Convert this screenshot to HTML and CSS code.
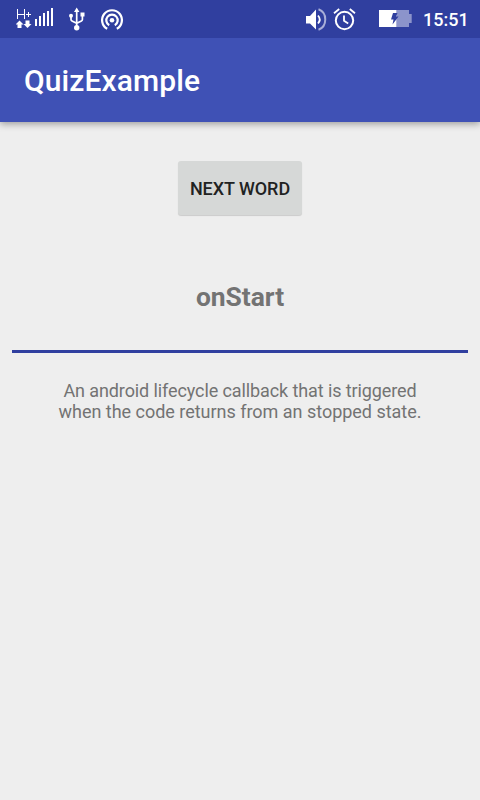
FILE: index.html
```html
<!DOCTYPE html>
<html lang="en">
<head>
<meta charset="utf-8">
<title>QuizExample</title>
<link rel="stylesheet" href="styles.css">
</head>
<body>
<header class="status">
  <svg class="signal" width="38" height="38" viewBox="16 0 38 38" fill="#fff">
    <path d="M17.500 9v10M24.500 9v10M17 14.500h8M26 14.500h5M28.500 12v5" fill="none" stroke="#fff" stroke-width="1"/>
    <path d="M19.500 20.500l4 4h-2v3.500h-4v-3.500h-2zM27.500 28l-4-4h2v-3.500h4v3.500h2z"/>
    <path d="M35 19h2v7h-2zM39 16h2v10h-2zM43 13h2v13h-2zM47 11h2v15h-2zM51 8h2v18h-2z"/>
  </svg>
  <svg class="usb" width="18" height="38" viewBox="68 0 18 38" fill="#fff">
    <path d="M76.700 11v16M71 16v3.500q0 1 1 1.500l4.700 2.300 4.700-2.300q1-.5 1-1.500v-4" fill="none" stroke="#fff" stroke-width="1.700"/>
    <path d="M76.700 7.500l2.700 4.500h-5.400zM80.500 12.500h4v4h-4z"/>
    <circle cx="71" cy="15.700" r="2"/><circle cx="76.700" cy="27.700" r="2.700"/>
  </svg>
  <svg class="hotspot" width="24" height="38" viewBox="100 0 24 38" fill="none" stroke="#fff" stroke-width="2.200">
    <circle cx="112" cy="20.200" r="2.300" fill="#fff" stroke="none"/>
    <path d="M107.200 28.800a9.900 9.900 0 1 1 9.600 0M109.200 25.200a5.700 5.700 0 1 1 5.600 0"/>
  </svg>
  <svg class="sound" width="22" height="38" viewBox="305 0 22 38" fill="#fff">
    <path d="M306 16h4l6-6.500v20L310 23.500h-4z"/>
    <path d="M318 15.500q3.500 4 0 8" fill="none" stroke="#fff" stroke-width="1.800"/>
    <path d="M318.500 9.300c9 3.200 9 17.200 0 20.400" fill="none" stroke="#a8aed8" stroke-width="2"/>
  </svg>
  <svg class="alarm" width="24" height="38" viewBox="333 0 24 38" fill="none" stroke="#fff" stroke-width="2">
    <circle cx="344.500" cy="20.500" r="8.700"/>
    <path d="M334 13.200l5.200-4.200M355 13.200l-5.200-4.200M344 15.500v5.200l4.200 2.700" stroke-width="1.800"/>
  </svg>
  <svg class="battery" width="34" height="38" viewBox="379 0 34 38">
    <path d="M396.500 10H409v4h2.700v9h-2.700v4h-12.500z" fill="#8c94cb"/>
    <path d="M379 10h17.500v17H379z" fill="#fff"/>
    <path d="M393 13h4.500l-1.500 3.500h2.500l-6 8 1-5h-2.500z" fill="#303f9f"/>
  </svg>
  <time class="clock">15:51</time>
</header>
<div class="appbar"><h1>QuizExample</h1></div>
<main>
  <button class="next">NEXT WORD</button>
  <h2>onStart</h2>
  <div class="rule"></div>
  <p><span class="lead">An android lifecycle callback that is triggered</span><br>when the code returns from an stopped state.</p>
</main>
</body>
</html>
```
FILE: styles.css
```css
body {
  margin: 0;
  min-height: 800px;
  background: #eee;
  font-family: Roboto, sans-serif;
}
.status {
  position: relative;
  z-index: 1;
  display: flex;
  height: 38px;
  padding-left: 16px;
  background: #303f9f;
  color: #fff;
}
.status svg { display: block; flex: none; }
.usb { margin-left: 14px; }
.hotspot { margin-left: 14px; }
.sound { margin-left: 181px; }
.alarm { margin-left: 6px; }
.battery { margin-left: 22px; }
.clock {
  margin-left: 10px;
  font-size: 18px;
  font-weight: 500;
  line-height: 40px;
}
.appbar {
  height: 84px;
  padding-left: 24px;
  background: #3f51b5;
  box-shadow: 0 2px 7px rgba(0, 0, 0, .35);
}
h1 {
  margin: 0;
  color: #fff;
  font-size: 30px;
  font-weight: 500;
  letter-spacing: .1px;
  line-height: 86px;
}
main {
  display: flex;
  flex-direction: column;
  align-items: center;
  padding: 39px 12px 0;
  color: #737373;
}
.next {
  width: 124px;
  height: 54px;
  padding: 2px 0 0;
  border: 0;
  border-radius: 3px;
  background: #d6d8d7;
  box-shadow: 0 1px 1px rgba(0, 0, 0, .15);
  color: #212222;
  font: 500 18px/52px Roboto, sans-serif;
  letter-spacing: -.05px;
  white-space: nowrap;
}
h2 {
  margin: 66px 0 0;
  font-size: 26.4px;
  font-weight: 700;
  line-height: 32px;
}
.rule {
  align-self: stretch;
  height: 3px;
  margin-top: 37px;
  background: #303f9f;
}
p {
  margin: 27px 0 0;
  font-size: 18px;
  letter-spacing: -.02px;
  line-height: 21px;
  text-align: center;
}
.lead { letter-spacing: -.1px; }
```
